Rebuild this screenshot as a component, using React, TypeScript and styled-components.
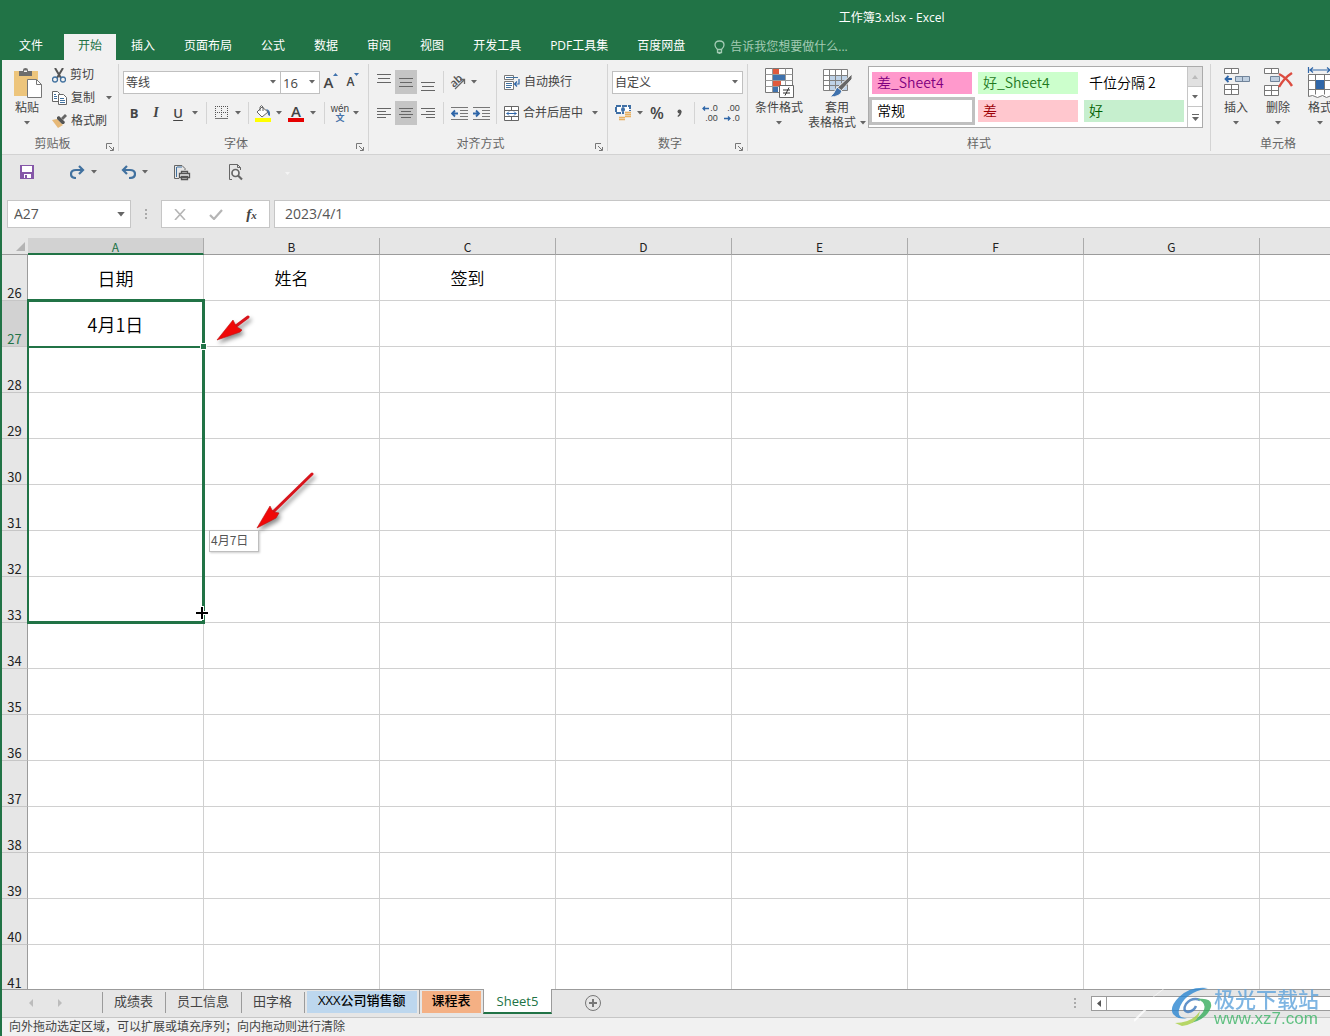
import React from 'react';
import styled, { createGlobalStyle, css } from 'styled-components';

const UI = '"Open Sans", "Noto Sans CJK SC", sans-serif';
const SHEET = '"Noto Sans CJK SC", "Open Sans", sans-serif';
const GREEN = '#217346';

const GlobalStyle = createGlobalStyle`
  *, *::before, *::after { box-sizing: border-box; }
  body { margin: 0; overflow: hidden; background: #e6e6e6; }
  button, input, select { font: inherit; color: inherit; margin: 0; border-radius: 0; }
  svg { display: block; flex: none; }
`;

const AppFrame = styled.div`
  position: relative;
  display: flex;
  flex-direction: column;
  height: 100vh;
  overflow: hidden;
  border-left: 2px solid ${GREEN};
  background: #e6e6e6;
  color: #444;
  font: 12px/16px ${UI};
`;

const TitleBar = styled.header`
  flex: none;
  height: 34px;
  padding: 10px 0 0 63%;
  background: ${GREEN};
  color: #fff;
  white-space: nowrap;
`;

const TabBar = styled.nav`
  flex: none;
  display: flex;
  gap: 1px;
  height: 26px;
  padding-left: 3px;
  background: ${GREEN};
`;

const RibbonTab = styled.button<{ $active?: boolean; $file?: boolean }>`
  flex: none;
  padding: 0 14px 2px;
  margin-right: ${p => (p.$file ? 6 : 0)}px;
  border: 0;
  background: ${p => (p.$active ? '#f1f1f1' : 'transparent')};
  color: ${p => (p.$active ? GREEN : '#fff')};
`;

const TellMe = styled.label`
  display: flex;
  align-items: center;
  gap: 5px;
  margin-left: 14px;
  color: #a3cbb4;
  input {
    width: 180px;
    height: 20px;
    padding: 0 0 1px;
    border: 0;
    outline: 0;
    background: transparent;
  }
  input::placeholder { color: #a3cbb4; opacity: 1; }
`;

const Ribbon = styled.section`
  flex: none;
  display: flex;
  height: 95px;
  overflow: hidden;
  background: #f1f1f1;
  border-bottom: 1px solid #d2d2d2;
`;

const Group = styled.section<{ $w: number }>`
  flex: none;
  display: flex;
  flex-direction: column;
  width: ${p => p.$w}px;
  height: 87px;
  margin-top: 4px;
  border-right: 1px solid #d4d4d4;
`;

const GroupBody = styled.div<{ $pad?: number }>`
  flex: 1;
  display: flex;
  align-items: flex-start;
  padding-left: ${p => p.$pad ?? 4}px;
`;

const GroupFoot = styled.footer<{ $launch: boolean }>`
  display: grid;
  grid-template-columns: ${p => (p.$launch ? '1fr 15px' : '1fr')};
  align-items: center;
  height: 15px;
  text-align: center;
  color: #666;
`;

const Launcher = styled.button`
  padding: 6px 0 0 3px;
  border: 0;
  background: transparent;
`;

const Stack = styled.div`
  display: flex;
  flex-direction: column;
`;

const ToolRows = styled(Stack)`
  gap: 9px;
  padding-top: 7px;
`;

const ToolRow = styled.div`
  display: flex;
  align-items: center;
  height: 22px;
`;

const Tool = styled.button<{ $w?: number; $on?: boolean }>`
  flex: none;
  display: flex;
  align-items: center;
  justify-content: center;
  width: ${p => p.$w ?? 22}px;
  height: ${p => (p.$on ? 24 : 22)}px;
  padding: 0;
  border: 0;
  background: ${p => (p.$on ? '#c5c5c5' : 'transparent')};
`;

const LabelTool = styled.button`
  display: flex;
  align-items: center;
  gap: 4px;
  height: 23px;
  padding: 0;
  border: 0;
  background: transparent;
  white-space: nowrap;
`;

const Glyph = styled.span<{ $kind: 'b' | 'i' | 'u' | 'plain' }>`
  font-size: 13px;
  line-height: 16px;
  ${p => p.$kind === 'b' && css`font-weight: 700;`}
  ${p => p.$kind === 'i' && css`font: italic 700 14px/16px "Liberation Serif", serif;`}
  ${p => p.$kind === 'u' && css`font-weight: 600; text-decoration: underline; text-underline-offset: 2px;`}
  ${p => p.$kind === 'plain' && css`font-size: 16px; font-weight: 600;`}
`;

const Divider = styled.span<{ $tall?: boolean; $wide?: boolean }>`
  flex: none;
  width: 1px;
  height: ${p => (p.$tall ? 54 : 22)}px;
  margin: ${p => (p.$tall ? '6px 4px 0' : p.$wide ? '0 5px' : '0 4px')};
  background: #d4d4d4;
`;

const BigTool = styled.button<{ $w: number }>`
  flex: none;
  display: flex;
  flex-direction: column;
  align-items: center;
  width: ${p => p.$w}px;
  padding: 3px 0 0;
  border: 0;
  background: transparent;
  line-height: 15px;
  white-space: nowrap;
  svg.art { margin-bottom: 2px; }
`;

const CaretLine = styled.span`
  display: flex;
  align-items: center;
  gap: 4px;
  height: 15px;
`;

const SelectBox = styled.label<{ $w: number }>`
  display: grid;
  align-items: center;
  width: ${p => p.$w}px;
  height: 23px;
  border: 1px solid #c0c0c0;
  background: #fff;
  & + & { margin-left: -1px; }
  select {
    grid-area: 1 / 1;
    width: 100%;
    height: 21px;
    padding: 1px 2px 0;
    border: 0;
    outline: 0;
    appearance: none;
    background: transparent;
  }
  svg { grid-area: 1 / 1; justify-self: end; margin-right: 4px; pointer-events: none; }
`;

const SizeSelect = styled(SelectBox)`
  select { font-size: 13px; }
`;

const Gallery = styled.div`
  display: flex;
  width: 335px;
  height: 62px;
  margin-top: 2px;
  border: 1px solid #ababab;
  background: #fff;
`;

const GalleryGrid = styled.div`
  flex: 1;
  display: grid;
  grid-template-columns: repeat(3, 100px);
  grid-auto-rows: 22px;
  gap: 6px;
  padding: 5px 3px;
`;

const StyleCell = styled.button<{ $bg: string; $fg: string; $on?: boolean }>`
  padding: 0 0 2px 5px;
  border: 0;
  background: ${p => p.$bg};
  color: ${p => p.$fg};
  outline: ${p => (p.$on ? '3px solid #c0c0c0' : '0')};
  font: 350 14px/20px ${SHEET};
  text-align: left;
`;

const GalleryNav = styled.div`
  display: grid;
  grid-template-rows: repeat(3, 1fr);
  width: 15px;
  border-left: 1px solid #c6c6c6;
`;

const NavButton = styled.button<{ $off?: boolean }>`
  display: grid;
  place-items: center;
  padding: 0;
  border: 0;
  border-bottom: 1px solid #c6c6c6;
  background: ${p => (p.$off ? '#e1e1e1' : '#fff')};
  &:last-child { border-bottom: 0; }
`;

const QuickBar = styled.div`
  flex: none;
  display: flex;
  align-items: center;
  height: 45px;
  padding: 0 0 11px 14px;
`;

const QuickItem = styled.div<{ $w: number }>`
  display: flex;
  align-items: center;
  width: ${p => p.$w}px;
`;

const FormulaBar = styled.div`
  flex: none;
  display: flex;
  height: 38px;
  padding: 0 0 10px 5px;
  font: 400 14px/20px ${UI};
  color: #555;
`;

const Field = styled.label`
  display: flex;
  align-items: center;
  border: 1px solid #c6c6c6;
  background: #fff;
  input {
    flex: 1;
    min-width: 0;
    padding: 0 0 1px;
    border: 0;
    outline: 0;
    background: transparent;
  }
`;

const NameBox = styled(Field)`
  width: 124px;
  padding: 0 5px 0 6px;
`;

const FormulaField = styled(Field)`
  flex: 1;
  margin-left: 4px;
  padding-left: 10px;
  border-right: 0;
`;

const Grip = styled.span`
  display: grid;
  place-items: center;
  width: 30px;
`;

const FormulaTools = styled.div`
  display: flex;
  align-items: center;
  width: 109px;
  border: 1px solid #c6c6c6;
  background: #fff;
`;

const SheetArea = styled.main`
  position: relative;
  flex: 1;
  min-height: 0;
  overflow: hidden;
`;

const Grid = styled.table`
  width: 100%;
  table-layout: fixed;
  border-collapse: separate;
  border-spacing: 0;
  font-family: ${SHEET};
`;

const HeadCol = styled.col`
  width: 26px;
`;

const DataCol = styled.col`
  width: 176px;
`;

const ColHead = styled.th<{ $on?: boolean }>`
  height: 17px;
  padding: 2px 0 0;
  border-right: 1px solid #ababab;
  border-bottom: ${p => (p.$on ? `2px solid ${GREEN}` : '1px solid #9b9b9b')};
  background: ${p => (p.$on ? '#d2d2d2' : '#e6e6e6')};
  color: ${p => (p.$on ? GREEN : '#222')};
  font-size: 12px;
  font-weight: 400;
  line-height: 13px;
  vertical-align: top;
  &:last-child { border-right: 0; }
`;

const Corner = styled.td`
  height: 17px;
  padding: 0 3px 3px 0;
  border-bottom: 1px solid #9b9b9b;
  vertical-align: bottom;
  svg { margin-left: auto; }
`;

const RowHead = styled.th<{ $on?: boolean }>`
  height: 46px;
  padding: 0;
  border-right: 1px solid #9b9b9b;
  border-bottom: 1px solid #c6c6c6;
  background: ${p => (p.$on ? '#d2d2d2' : '#e6e6e6')};
  color: ${p => (p.$on ? GREEN : '#222')};
  font-size: 13px;
  font-weight: 400;
  line-height: 14px;
  vertical-align: bottom;
`;

const Cell = styled.td<{ $big?: boolean }>`
  position: relative;
  height: 46px;
  padding: 0;
  border-right: 1px solid #d0d0d0;
  border-bottom: 1px solid #d0d0d0;
  background: #fff;
  color: #000;
  font-size: ${p => (p.$big ? 18 : 17)}px;
  font-weight: 350;
  line-height: 24px;
  text-align: center;
  &:last-child { border-right: 0; }
`;

const FillRange = styled.span`
  position: absolute;
  z-index: 1;
  top: -2px;
  left: -1px;
  width: 178px;
  height: 325px;
  border: 3px solid ${GREEN};
  border-left-width: 2px;
`;

const ActiveEdge = styled.span`
  position: absolute;
  z-index: 1;
  right: 1px;
  bottom: -2px;
  left: 0;
  height: 2px;
  background: ${GREEN};
`;

const FillHandle = styled.span`
  position: absolute;
  z-index: 2;
  right: -4px;
  bottom: -4px;
  width: 7px;
  height: 7px;
  border: 1px solid #fff;
  background: ${GREEN};
`;

const Floating = styled.div<{ $x: number; $y: number }>`
  position: absolute;
  z-index: 3;
  left: ${p => p.$x}px;
  top: ${p => p.$y}px;
`;

const DragTip = styled(Floating)`
  width: 50px;
  height: 22px;
  padding: 0 1px;
  border: 1px solid #bebebe;
  background: #fff;
  box-shadow: 1px 1px 2px rgba(0, 0, 0, 0.2);
  color: #555;
  font: 12px/18px ${SHEET};
`;

const SheetBar = styled.div`
  flex: none;
  display: flex;
  align-items: flex-start;
  height: 29px;
  border-top: 1px solid #9b9b9b;
  border-bottom: 1px solid #c6c6c6;
`;

const SheetNav = styled.div`
  display: flex;
  align-items: center;
  gap: 23px;
  width: 100px;
  height: 26px;
  padding-left: 26px;
  button { padding: 0; border: 0; background: transparent; }
`;

const SheetTabs = styled.div`
  display: flex;
  font-size: 13px;
`;

const SheetTab = styled.button<{ $first?: boolean }>`
  height: 21px;
  margin-top: 2px;
  padding: 0 12px 4px 11px;
  border: 0;
  border-right: 1px solid #9b9b9b;
  border-left: ${p => (p.$first ? '1px solid #9b9b9b' : '0')};
  background: transparent;
  line-height: 16px;
  white-space: nowrap;
`;

const ColourTab = styled.button<{ $bg: string; $pad: number; $line?: boolean }>`
  height: 24px;
  padding: 1px 2px;
  border: 0;
  border-right: ${p => (p.$line ? '1px solid #9b9b9b' : '0')};
  background: transparent;
  color: #000;
  font-weight: 500;
  white-space: nowrap;
  span {
    display: block;
    height: 22px;
    padding: 0 ${p => p.$pad}px;
    background: ${p => p.$bg};
    line-height: 19px;
  }
`;

const ActiveTab = styled.button`
  height: 25px;
  margin-top: -1px;
  padding: 0 13px;
  border: 1px solid #9b9b9b;
  border-top: 0;
  border-bottom: 2px solid ${GREEN};
  background: #fff;
  color: ${GREEN};
  font-weight: 500;
  line-height: 22px;
`;

const AddSheet = styled.button`
  margin: 5px auto 0 33px;
  padding: 0;
  border: 0;
  background: transparent;
`;

const ScrollArea = styled.div`
  display: flex;
  align-items: center;
  gap: 15px;
  width: 256px;
  height: 26px;
`;

const ScrollTrack = styled.div`
  flex: 1;
  display: flex;
  height: 15px;
  border: 1px solid #9b9b9b;
  border-right: 0;
  background: #fff;
  button {
    display: grid;
    place-items: center;
    width: 15px;
    padding: 0;
    border: 0;
    border-right: 1px solid #9b9b9b;
    background: #fff;
  }
`;

const StatusBar = styled.footer`
  flex: none;
  height: 18px;
  padding: 1px 0 0 7px;
  background: #f1f1f1;
`;

const Watermark = styled.div`
  position: absolute;
  z-index: 5;
  right: 11px;
  bottom: 7px;
  display: flex;
  gap: 2px;
  opacity: 0.8;
  pointer-events: none;
`;

const MarkText = styled.div`
  display: flex;
  flex-direction: column;
  color: #5fa3dc;
  font: 500 21px/22px ${SHEET};
  a {
    color: #3cb567;
    font: 400 17px/20px "Liberation Sans", sans-serif;
    text-decoration: none;
  }
`;

const Caret = ({ className, big }: { className?: string; big?: boolean }) => (
  <svg className={className} width={big ? 8 : 6} height={big ? 5 : 4} viewBox="0 0 6 4" fill="#666">
    <path d="M0 0h6L3 3.5z" />
  </svg>
);

const CaretButton = ({ label }: { label: string }) => (
  <Tool $w={12} aria-label={label}><Caret /></Tool>
);

const PasteArt = () => (
  <svg className="art" width="30" height="31" viewBox="0 0 30 31">
    <path d="M2 4h24v25H2z" fill="#edc57c" />
    <path d="M7 4h4V3q0-2 2.500-2T16 3v1h4v5H7z" fill="#6d6d6d" />
    <path d="M12 3.500h3V5h-3z" fill="#f1f1f1" />
    <path d="M15.500 12.500h9l5 5v13h-14z" fill="#fff" stroke="#777" />
    <path d="M24.500 12.500v5h5" fill="none" stroke="#777" />
  </svg>
);

const CutArt = () => (
  <svg width="14" height="15" viewBox="0 0 14 15" fill="none">
    <path d="M3 0l6 10M11 0L5 10" stroke="#555" strokeWidth="2" />
    <circle cx="3" cy="11.500" r="2.500" stroke="#41719f" strokeWidth="1.300" />
    <circle cx="11" cy="11.500" r="2.500" stroke="#41719f" strokeWidth="1.300" />
  </svg>
);

const CopyArt = () => (
  <svg width="15" height="14" viewBox="0 0 15 14" fill="#fff" stroke="#666">
    <path d="M.5.5h5l2 2v8h-7z" />
    <path d="M2 3.500h2M2 5.500h3M2 7.500h3" stroke="#41719f" />
    <path d="M6.500 3.500h5l3 3v7h-8z" />
    <path d="M8 7.500h4M8 9.500h5M8 11.500h5" stroke="#41719f" />
  </svg>
);

const BrushArt = () => (
  <svg width="15" height="14" viewBox="0 0 15 14">
    <path d="M0 6l5-1 6 6-5 3z" fill="#e6b877" />
    <path d="M5 3l2-1 6 6-1 2-2 0-5-5z" fill="#555" />
    <path d="M9 4l4-4 2 2-4 4z" fill="#666" />
  </svg>
);

const BordersArt = () => (
  <svg width="14" height="14" viewBox="0 0 14 14" stroke="#555" fill="none" strokeDasharray="1 1">
    <path d="M0 .5h13M0 6.500h13M.5 0v13M6.500 0v13M12.500 0v13" />
    <path d="M0 12.500h13" strokeDasharray="none" stroke="#777" />
  </svg>
);

const FillArt = () => (
  <svg width="16" height="17" viewBox="0 0 16 17">
    <path d="M7 2l6 5-6 5-5-5z" fill="#fff" stroke="#666" />
    <path d="M5 6V2q1.500-3 3 0v4" fill="none" stroke="#666" />
    <path d="M11 4q5 1 4 7-3-1-2-4z" fill="#4472a8" />
    <path d="M0 13h16v4H0z" fill="#ff0" />
  </svg>
);

const FontColourBox = styled.span`
  width: 16px;
  height: 17px;
  border-bottom: 4px solid #e60000;
  font-size: 15px;
  font-weight: 600;
  line-height: 13px;
  text-align: center;
`;

const SizeGlyph = styled.span<{ $size: number }>`
  display: flex;
  align-items: flex-start;
  font-size: ${p => p.$size}px;
  font-weight: 600;
  line-height: 18px;
`;

const Phonetic = styled.span`
  font: 10px/9px "Liberation Sans", sans-serif;
  text-align: center;
  b { display: block; color: #4472a8; font: 700 9px/10px ${SHEET}; }
`;

const DecimalGlyph = styled.span`
  display: grid;
  font: 9px/10px "Liberation Sans", sans-serif;
  text-align: right;
  span { display: flex; align-items: center; justify-content: flex-end; gap: 1px; }
`;

const Lines = ({ rows, y = 0 }: { rows: [number, number][]; y?: number }) => (
  <svg width="14" height="18" viewBox="0 0 14 18" stroke="#666">
    {rows.map(([a, b], i) => <path key={i} d={`M${a} ${y + i * (rows.length === 3 ? 4 : 3) + 0.5}H${b}`} />)}
  </svg>
);

const three: [number, number][] = [[0, 14], [1, 13], [0, 14]];

const OrientArt = () => (
  <svg width="18" height="18" viewBox="0 0 18 18" overflow="visible">
    <text x="0" y="13" fontSize="11" fontWeight="600" fontFamily="Open Sans" fill="#555" transform="rotate(-42 5 8)">ab</text>
    <path d="M6 16l9-9M15.500 11V6.500H11" fill="none" stroke="#666" strokeWidth="1.300" />
  </svg>
);

const IndentArt = ({ flip }: { flip?: boolean }) => (
  <svg width="17" height="13" viewBox="0 0 17 13">
    <path d="M0 .5h17M9 3.500h8M9 6.500h8M9 9.500h8M0 12.500h17" stroke="#777" />
    <path d={flip ? 'M0 6.500h6M3 3.500l3 3-3 3' : 'M7 6.500H2M4 3.500l-3 3 3 3'} stroke="#2f66a8" strokeWidth="1.800" fill="none" />
  </svg>
);

const WrapArt = () => (
  <svg width="16" height="15" viewBox="0 0 16 15" fill="none">
    <path d="M.5.5h9v4h-9zM.5 6.500h9v8h-9z" stroke="#777" fill="#fff" />
    <path d="M2 2.500h12M2 8.500h6M2 10.500h6M2 12.500h5" stroke="#41719f" />
    <path d="M15 4v5h-4M13 6.500L10.500 9l2.500 2.500" stroke="#2f66a8" strokeWidth="1.200" />
  </svg>
);

const MergeArt = () => (
  <svg width="15" height="15" viewBox="0 0 15 15" fill="none">
    <path d="M.5.5h14v14H.5zM.5 4.500h14M.5 10.500h14M7.500.5v4M7.500 10.500v4" stroke="#666" fill="#fff" />
    <path d="M2.500 7.500h10M5 5.500l-2 2 2 2M10 5.500l2 2-2 2" stroke="#2f66a8" />
  </svg>
);

const CurrencyArt = () => (
  <svg width="17" height="16" viewBox="0 0 17 16">
    <path d="M1 1h14v7H1z" fill="#fff" stroke="#3f6fa5" strokeWidth="2" strokeDasharray="5 1" />
    <ellipse cx="8" cy="4.500" rx="2" ry="2.500" fill="#3f6fa5" />
    <path d="M9 6h7v7h-5v3H3v-4h6z" fill="#f1f1f1" />
    <path d="M10 7.500h6M10 9.500h6M10 11.500h6M4 12.500h6M4 14.500h6" stroke="#e9b161" strokeWidth="1.400" />
  </svg>
);

const Arrow = ({ right }: { right?: boolean }) => (
  <svg width="7" height="5" viewBox="0 0 7 5" fill="none" stroke="#2f66a8" strokeWidth="1.300">
    <path d={right ? 'M0 2.500h6M4 .5l2 2-2 2' : 'M7 2.500H1M3 .5l-2 2 2 2'} />
  </svg>
);

const ConditionalArt = () => (
  <svg className="art" width="31" height="31" viewBox="0 0 31 31">
    <path d="M1.500 1.500h27v24h-27z" fill="#fff" stroke="#777" />
    <path d="M1.500 7.500h27M1.500 13.500h27M1.500 19.500h27M8.500 1.500v24M21.500 1.500v24" stroke="#999" />
    <path d="M9 2h6v5H9zM9 14h8v5H9z" fill="#e05a3c" />
    <path d="M9 8h12v5H9zM9 20h5v5H9z" fill="#3f72ad" />
    <path d="M15.500 18.500h14v12h-14z" fill="#fff" stroke="#666" />
    <path d="M19 23h7M19 26h7M25 20.500l-4 8" stroke="#333" />
  </svg>
);

const TableArt = () => (
  <svg className="art" width="31" height="31" viewBox="0 0 31 31">
    <path d="M1.500 2.500h24v21h-24z" fill="#fff" />
    <path d="M8 8h18v16H8z" fill="#bfd3e8" />
    <path d="M1.500 2.500h24v21h-24zM1.500 8.500h24M1.500 13.500h24M1.500 18.500h24M7.500 2.500v21M13.500 2.500v21M19.500 2.500v21" fill="none" stroke="#808080" />
    <path d="M30 7v5L19 24l-4-3z" fill="#666" stroke="#f1f1f1" />
    <path d="M15 20l5 4q-2 6-12 6 4-3 7-10z" fill="#3f72ad" stroke="#f1f1f1" />
  </svg>
);

const InsertArt = () => (
  <svg className="art" width="27" height="31" viewBox="0 0 27 31">
    <path d="M1.500 1.500h14v5h-14zM8.500 1.500v5M1.500 17.500h14v10h-14zM1.500 22.500h14M8.500 17.500v10" fill="#fff" stroke="#777" />
    <path d="M12.500 9.500h14v5h-14zM19.500 9.500v5" fill="#bfcfe0" stroke="#71849a" />
    <path d="M9 12H3M5.500 9L2.500 12l3 3" stroke="#2f66a8" strokeWidth="1.800" fill="none" />
  </svg>
);

const DeleteArt = () => (
  <svg className="art" width="31" height="31" viewBox="0 0 31 31">
    <path d="M1.500 1.500h14v5h-14zM8.500 1.500v5M1.500 18.500h14v10h-14zM1.500 23.500h14M8.500 18.500v10" fill="#fff" stroke="#777" />
    <path d="M7.500 9.500h9v5h-9z" fill="#bfcfe0" stroke="#71849a" />
    <path d="M16 7q8 4 13 12M29 6q-8 5-13 14" stroke="#dc4c40" strokeWidth="2.400" fill="none" />
  </svg>
);

const FormatArt = () => (
  <svg className="art" width="28" height="31" viewBox="0 0 28 31" fill="none">
    <path d="M2.500 0v6M25.500 0v6M4 3h20M7 .5L4 3l3 2.500M21 .5L24 3l-3 2.500" stroke="#2f66a8" strokeWidth="1.200" />
    <path d="M2.500 7.500h23v21l-5 2-4-2-5 2-5-2-4 1z" fill="#fff" stroke="#777" />
    <path d="M2.500 13.500h23M2.500 22.500h23M9.500 7.500v20M18.500 7.500v20" stroke="#777" />
    <path d="M10 13h8v9h-8z" fill="#2f66a8" />
  </svg>
);

const SaveArt = () => (
  <svg width="14" height="14" viewBox="0 0 14 14">
    <path d="M0 0h14v14H0z" fill="#8557a8" />
    <path d="M2 1h10v6H2zM4 9h7v4H4z" fill="#fff" />
    <path d="M5 10h2v3H5z" fill="#8557a8" />
  </svg>
);

const TurnArt = ({ back }: { back?: boolean }) => (
  <svg width="15" height="14" viewBox="0 0 15 14" fill="none" stroke="#41719f" strokeWidth="2.200">
    <path d={back ? 'M6 1L2 5l4 4M2 5h7q5 0 5 4t-6 4' : 'M9 1l4 4-4 4M13 5H6Q1 5 1 9t5 4'} />
  </svg>
);

const PrintArt = () => (
  <svg width="17" height="17" viewBox="0 0 17 17" fill="none">
    <path d="M5 14.500H.5v-13H8l3 3V6" stroke="#666" />
    <path d="M2.500 3v10M3 3h5" stroke="#41719f" />
    <path d="M7.500 9.500v-2h6v2M5.500 9.500h10v4h-10zM7.500 12.500h6v3h-6z" fill="#eee" stroke="#555" strokeWidth="1.300" />
  </svg>
);

const PreviewArt = () => (
  <svg width="16" height="17" viewBox="0 0 16 17" fill="none" stroke="#666">
    <path d="M4 15.500H1.500v-15h8l3 3V6M9.500.5v3h3" />
    <circle cx="7.500" cy="9" r="3.500" strokeWidth="1.700" fill="#eee" />
    <path d="M10 11.500l4 4" strokeWidth="2.200" />
  </svg>
);

const ArrowArt = styled.svg`
  filter: drop-shadow(2px 3px 2px rgba(0, 0, 0, 0.45));
`;

const RedArrow = ({ w, h, tail, head }: { w: number; h: number; tail: string; head: string }) => (
  <ArrowArt width={w} height={h} viewBox={`0 0 ${w} ${h}`}>
    <path d={tail} stroke="#d8141c" strokeWidth="3" strokeLinecap="round" />
    <path d={head} fill="#f00808" stroke="#c01010" strokeWidth=".6" />
  </ArrowArt>
);

const SwirlArt = () => (
  <svg width="42" height="40" viewBox="0 0 42 40" fill="none">
    <path d="M38 1Q20-1 9 10-1 20 3 27q5 6 14 4-10 0-8-8Q13 6 38 1z" fill="#2b87d1" />
    <path d="M30 13q-8-3-14 4-4 7 2 8 6-1 8-6" stroke="#3b78bd" strokeWidth="2.500" />
    <path d="M27 12q16-2 14 8-4 13-24 17 11-5 16-12 5-9-6-13z" fill="#38ad5d" />
    <path d="M5 36q17 0 25-12-2 13-18 15z" fill="#a8d044" />
  </svg>
);

const GroupFooter = ({ name, launch = true }: { name: string; launch?: boolean }) => (
  <GroupFoot $launch={launch}>
    <span>{name}</span>
    {launch && (
      <Launcher aria-label={`${name}设置`}>
        <svg width="8" height="8" viewBox="0 0 8 8" fill="none" stroke="#777">
          <path d="M.5 6V.5H6M3 3l4 4M7.500 4v3.500H4" />
        </svg>
      </Launcher>
    )}
  </GroupFoot>
);

const ClipRow = styled(LabelTool)`
  width: 58px;
  padding-left: 7px;
`;

const ClipStack = styled(Stack)`
  gap: 1px;
`;

const WideTool = styled(LabelTool)`
  padding-left: 3px;
`;

const WideCaret = styled(Tool)`
  width: 24px;
`;

const Fx = styled.i`
  color: #444;
  font: italic 700 15px/18px "Liberation Serif", serif;
  small { font-size: 11px; }
`;

const galleryStyles = [
  { name: '差_Sheet4', bg: '#ff99cc', fg: '#800080' },
  { name: '好_Sheet4', bg: '#ccffcc', fg: '#1f7a1f' },
  { name: '千位分隔 2', bg: '#ffffff', fg: '#000000' },
  { name: '常规', bg: '#ffffff', fg: '#000000', on: true },
  { name: '差', bg: '#ffc7ce', fg: '#9c0006' },
  { name: '好', bg: '#c6efce', fg: '#006100' },
];

const ribbonTabs = ['开始', '插入', '页面布局', '公式', '数据', '审阅', '视图', '开发工具', 'PDF工具集', '百度网盘'];
const columns = ['A', 'B', 'C', 'D', 'E', 'F', 'G', ''];
const rows = Array.from({ length: 16 }, (_, i) => 26 + i);
const cells: Record<string, string> = { A26: '日期', B26: '姓名', C26: '签到', A27: '4月1日' };

function RibbonGroups() {
  return (
    <Ribbon>
      <Group $w={117}>
        <GroupBody $pad={7}>
          <BigTool $w={36}><PasteArt /><span>粘贴</span><CaretLine><Caret /></CaretLine></BigTool>
          <ClipStack>
            <ToolRow><ClipRow><CutArt />剪切</ClipRow></ToolRow>
            <ToolRow><ClipRow><CopyArt />复制</ClipRow><CaretButton label="复制选项" /></ToolRow>
            <ToolRow><ClipRow><BrushArt />格式刷</ClipRow></ToolRow>
          </ClipStack>
        </GroupBody>
        <GroupFooter name="剪贴板" />
      </Group>

      <Group $w={250}>
        <GroupBody>
          <ToolRows>
            <ToolRow>
              <SelectBox $w={158}>
                <select aria-label="字体"><option>等线</option></select><Caret />
              </SelectBox>
              <SizeSelect $w={40}>
                <select aria-label="字号"><option>16</option></select><Caret />
              </SizeSelect>
              <Tool aria-label="增大字号">
                <SizeGlyph $size={15}>A<svg width="5" height="3" viewBox="0 0 5 3"><path d="M0 3h5L2.500 0z" fill="#3f72ad" /></svg></SizeGlyph>
              </Tool>
              <Tool aria-label="减小字号">
                <SizeGlyph $size={12}>A<svg width="5" height="3" viewBox="0 0 5 3"><path d="M0 0h5L2.500 3z" fill="#3f72ad" /></svg></SizeGlyph>
              </Tool>
            </ToolRow>
            <ToolRow>
              <Tool><Glyph $kind="b">B</Glyph></Tool>
              <Tool><Glyph $kind="i">I</Glyph></Tool>
              <Tool><Glyph $kind="u">U</Glyph></Tool>
              <CaretButton label="下划线" />
              <Divider $wide />
              <Tool $w={20} aria-label="边框"><BordersArt /></Tool>
              <CaretButton label="边框选项" />
              <Divider />
              <Tool $w={20} aria-label="填充颜色"><FillArt /></Tool>
              <CaretButton label="填充颜色选项" />
              <Tool><FontColourBox>A</FontColourBox></Tool>
              <CaretButton label="字体颜色选项" />
              <Divider $wide />
              <Tool $w={20}><Phonetic>wén<b>文</b></Phonetic></Tool>
              <CaretButton label="拼音选项" />
            </ToolRow>
          </ToolRows>
        </GroupBody>
        <GroupFooter name="字体" />
      </Group>

      <Group $w={239}>
        <GroupBody>
          <ToolRows>
            <ToolRow>
              <Tool aria-label="顶端对齐"><Lines rows={three} y={1} /></Tool>
              <Tool $on aria-label="垂直居中"><Lines rows={three} y={5} /></Tool>
              <Tool aria-label="底端对齐"><Lines rows={three} y={9} /></Tool>
              <Divider />
              <Tool $w={20} aria-label="方向"><OrientArt /></Tool>
              <CaretButton label="方向选项" />
            </ToolRow>
            <ToolRow>
              <Tool aria-label="左对齐"><Lines y={4} rows={[[0, 14], [0, 9], [0, 14], [0, 9]]} /></Tool>
              <Tool $on aria-label="居中"><Lines y={4} rows={[[0, 14], [2, 12], [0, 14], [2, 12]]} /></Tool>
              <Tool aria-label="右对齐"><Lines y={4} rows={[[0, 14], [5, 14], [0, 14], [5, 14]]} /></Tool>
              <Divider />
              <Tool aria-label="减少缩进量"><IndentArt /></Tool>
              <Tool aria-label="增加缩进量"><IndentArt flip /></Tool>
            </ToolRow>
          </ToolRows>
          <Divider $tall />
          <ToolRows>
            <ToolRow><WideTool><WrapArt />自动换行</WideTool></ToolRow>
            <ToolRow><WideTool><MergeArt />合并后居中</WideTool><WideCaret aria-label="合并选项"><Caret /></WideCaret></ToolRow>
          </ToolRows>
        </GroupBody>
        <GroupFooter name="对齐方式" />
      </Group>

      <Group $w={140}>
        <GroupBody>
          <ToolRows>
            <ToolRow>
              <SelectBox $w={131}>
                <select aria-label="数字格式"><option>自定义</option></select><Caret />
              </SelectBox>
            </ToolRow>
            <ToolRow>
              <Tool aria-label="会计数字格式"><CurrencyArt /></Tool>
              <CaretButton label="会计选项" />
              <Tool><Glyph $kind="plain">%</Glyph></Tool>
              <Tool aria-label="千位分隔样式">
                <svg width="5" height="9" viewBox="0 0 5 9"><circle cx="2.500" cy="2.500" r="2" fill="#555" /><path d="M4.500 2.500Q4.500 6 1 8l-.5-1Q3 5 2.500 3z" fill="#555" /></svg>
              </Tool>
              <Divider />
              <Tool aria-label="增加小数位数"><DecimalGlyph><span><Arrow />.0</span><span>.00</span></DecimalGlyph></Tool>
              <Tool aria-label="减少小数位数"><DecimalGlyph><span>.00</span><span><Arrow right />.0</span></DecimalGlyph></Tool>
            </ToolRow>
          </ToolRows>
        </GroupBody>
        <GroupFooter name="数字" />
      </Group>

      <Group $w={463}>
        <GroupBody>
          <BigTool $w={54}><ConditionalArt /><span>条件格式</span><CaretLine><Caret /></CaretLine></BigTool>
          <BigTool $w={62}><TableArt /><span>套用</span><CaretLine>表格格式<Caret /></CaretLine></BigTool>
          <Gallery>
            <GalleryGrid>
              {galleryStyles.map(s => (
                <StyleCell key={s.name} $bg={s.bg} $fg={s.fg} $on={s.on}>{s.name}</StyleCell>
              ))}
            </GalleryGrid>
            <GalleryNav>
              <NavButton $off aria-label="上一行"><svg width="6" height="4" viewBox="0 0 6 4"><path d="M0 4h6L3 0z" fill="#bbb" /></svg></NavButton>
              <NavButton aria-label="下一行"><Caret /></NavButton>
              <NavButton aria-label="更多样式"><svg width="7" height="7" viewBox="0 0 7 7"><path d="M0 .5h7" stroke="#666" /><path d="M0 3h7L3.500 7z" fill="#666" /></svg></NavButton>
            </GalleryNav>
          </Gallery>
        </GroupBody>
        <GroupFooter name="样式" launch={false} />
      </Group>

      <Group $w={135}>
        <GroupBody>
          <BigTool $w={42}><InsertArt /><span>插入</span><CaretLine><Caret /></CaretLine></BigTool>
          <BigTool $w={42}><DeleteArt /><span>删除</span><CaretLine><Caret /></CaretLine></BigTool>
          <BigTool $w={42}><FormatArt /><span>格式</span><CaretLine><Caret /></CaretLine></BigTool>
        </GroupBody>
        <GroupFooter name="单元格" launch={false} />
      </Group>
    </Ribbon>
  );
}

export default function App() {
  return (
    <AppFrame>
      <GlobalStyle />
      <TitleBar>工作簿3.xlsx - Excel</TitleBar>
      <TabBar>
        <RibbonTab $file>文件</RibbonTab>
        {ribbonTabs.map((t, i) => <RibbonTab key={t} $active={i === 0}>{t}</RibbonTab>)}
        <TellMe>
          <svg width="11" height="14" viewBox="0 0 11 14" fill="none" stroke="#a3cbb4" strokeWidth="1.300">
            <path d="M3.500 9.500Q1 7 1 5q0-4 4.500-4T10 5q0 2-2.500 4.500zM3.500 9.500v3h4v-3M4.500 13.500h2" />
          </svg>
          <input aria-label="告诉我" placeholder="告诉我您想要做什么..." />
        </TellMe>
      </TabBar>

      <RibbonGroups />

      <QuickBar>
        <QuickItem $w={50}><Tool aria-label="保存"><SaveArt /></Tool></QuickItem>
        <QuickItem $w={51}><Tool aria-label="恢复"><TurnArt /></Tool><CaretButton label="恢复选项" /></QuickItem>
        <QuickItem $w={54}><Tool aria-label="撤消"><TurnArt back /></Tool><CaretButton label="撤消选项" /></QuickItem>
        <QuickItem $w={54}><Tool aria-label="快速打印"><PrintArt /></Tool></QuickItem>
        <QuickItem $w={60}><Tool aria-label="打印预览"><PreviewArt /></Tool></QuickItem>
        <svg width="5" height="5" viewBox="0 0 5 5"><path d="M0 .5h5M0 2h5L2.500 5z" fill="#f4f4f4" /></svg>
      </QuickBar>

      <FormulaBar>
        <NameBox><input aria-label="名称框" defaultValue="A27" /><Caret big /></NameBox>
        <Grip><svg width="2" height="11" viewBox="0 0 2 11" fill="#aaa"><path d="M0 0h2v2H0zM0 4h2v2H0zM0 8h2v2H0z" /></svg></Grip>
        <FormulaTools>
          <Tool $w={36} aria-label="取消"><svg width="12" height="11" viewBox="0 0 12 11" stroke="#b5b5b5" strokeWidth="1.600"><path d="M1 0l10 11M11 0L1 11" /></svg></Tool>
          <Tool $w={36} aria-label="输入"><svg width="14" height="11" viewBox="0 0 14 11" fill="none" stroke="#b5b5b5" strokeWidth="2.200"><path d="M1 6l4 4 8-9" /></svg></Tool>
          <Tool $w={35}><Fx>f<small>x</small></Fx></Tool>
        </FormulaTools>
        <FormulaField><input aria-label="编辑栏" defaultValue="2023/4/1" /></FormulaField>
      </FormulaBar>

      <SheetArea>
        <Grid>
          <colgroup>
            <HeadCol />
            {columns.map((c, i) => (c ? <DataCol key={i} /> : <col key={i} />))}
          </colgroup>
          <thead>
            <tr>
              <Corner><svg width="9" height="9" viewBox="0 0 9 9"><path d="M9 0v9H0z" fill="#b4b4b4" /></svg></Corner>
              {columns.map((c, i) => <ColHead key={i} $on={c === 'A'}>{c}</ColHead>)}
            </tr>
          </thead>
          <tbody>
            {rows.map(r => (
              <tr key={r}>
                <RowHead scope="row" $on={r === 27}>{r}</RowHead>
                {columns.map((c, i) => (
                  <Cell key={i} $big={c === 'A'}>
                    {cells[c + r]}
                    {c + r === 'A27' && <><FillRange /><ActiveEdge /><FillHandle /></>}
                  </Cell>
                ))}
              </tr>
            ))}
          </tbody>
        </Grid>
        <Floating $x={213} $y={74}>
          <RedArrow w={42} h={36} tail="M21 14L33 5" head="M2 28L18 8l2 4 2 3 5 3-2 2z" />
        </Floating>
        <Floating $x={253} $y={232}>
          <RedArrow w={66} h={64} tail="M17 43L57 4" head="M2 58L15 36l2 4 2 2 5 1-3 5z" />
        </Floating>
        <DragTip $x={207} $y={292}>4月7日</DragTip>
        <Floating $x={193} $y={368}>
          <svg width="14" height="14" viewBox="0 0 14 14"><path d="M7 0v14M0 7h14" stroke="#fff" strokeWidth="4" /><path d="M7 1v12M1 7h12" stroke="#000" strokeWidth="2" /></svg>
        </Floating>
      </SheetArea>

      <SheetBar>
        <SheetNav>
          <button aria-label="上一个工作表"><svg width="6" height="8" viewBox="0 0 6 8"><path d="M5 0v8L1 4z" fill="#bcbcbc" /></svg></button>
          <button aria-label="下一个工作表"><svg width="6" height="8" viewBox="0 0 6 8"><path d="M1 0v8l4-4z" fill="#bcbcbc" /></svg></button>
        </SheetNav>
        <SheetTabs>
          <SheetTab $first>成绩表</SheetTab>
          <SheetTab>员工信息</SheetTab>
          <SheetTab>田字格</SheetTab>
          <ColourTab $bg="#bdd7ee" $pad={11} $line><span>XXX公司销售额</span></ColourTab>
          <ColourTab $bg="#f4b084" $pad={10}><span>课程表</span></ColourTab>
          <ActiveTab>Sheet5</ActiveTab>
        </SheetTabs>
        <AddSheet aria-label="新工作表">
          <svg width="16" height="16" viewBox="0 0 16 16" fill="none" stroke="#777"><circle cx="8" cy="8" r="7.500" /><path d="M8 4v8M4 8h8" strokeWidth="2" /></svg>
        </AddSheet>
        <ScrollArea>
          <svg width="2" height="11" viewBox="0 0 2 11" fill="#aaa"><path d="M0 0h2v2H0zM0 4h2v2H0zM0 8h2v2H0z" /></svg>
          <ScrollTrack><button aria-label="向左滚动"><svg width="4" height="7" viewBox="0 0 4 7"><path d="M4 0v7L0 3.500z" fill="#555" /></svg></button></ScrollTrack>
        </ScrollArea>
      </SheetBar>
      <StatusBar>向外拖动选定区域，可以扩展或填充序列；向内拖动则进行清除</StatusBar>

      <Watermark>
        <svg width="34" height="40" viewBox="0 0 34 40" fill="none" stroke="#fff"><path d="M0 34L12 22" strokeWidth="2" /><path d="M14 14L32 0" opacity=".7" /></svg>
        <SwirlArt />
        <MarkText>极光下载站<a href="#site">www.xz7.com</a></MarkText>
      </Watermark>
    </AppFrame>
  );
}
